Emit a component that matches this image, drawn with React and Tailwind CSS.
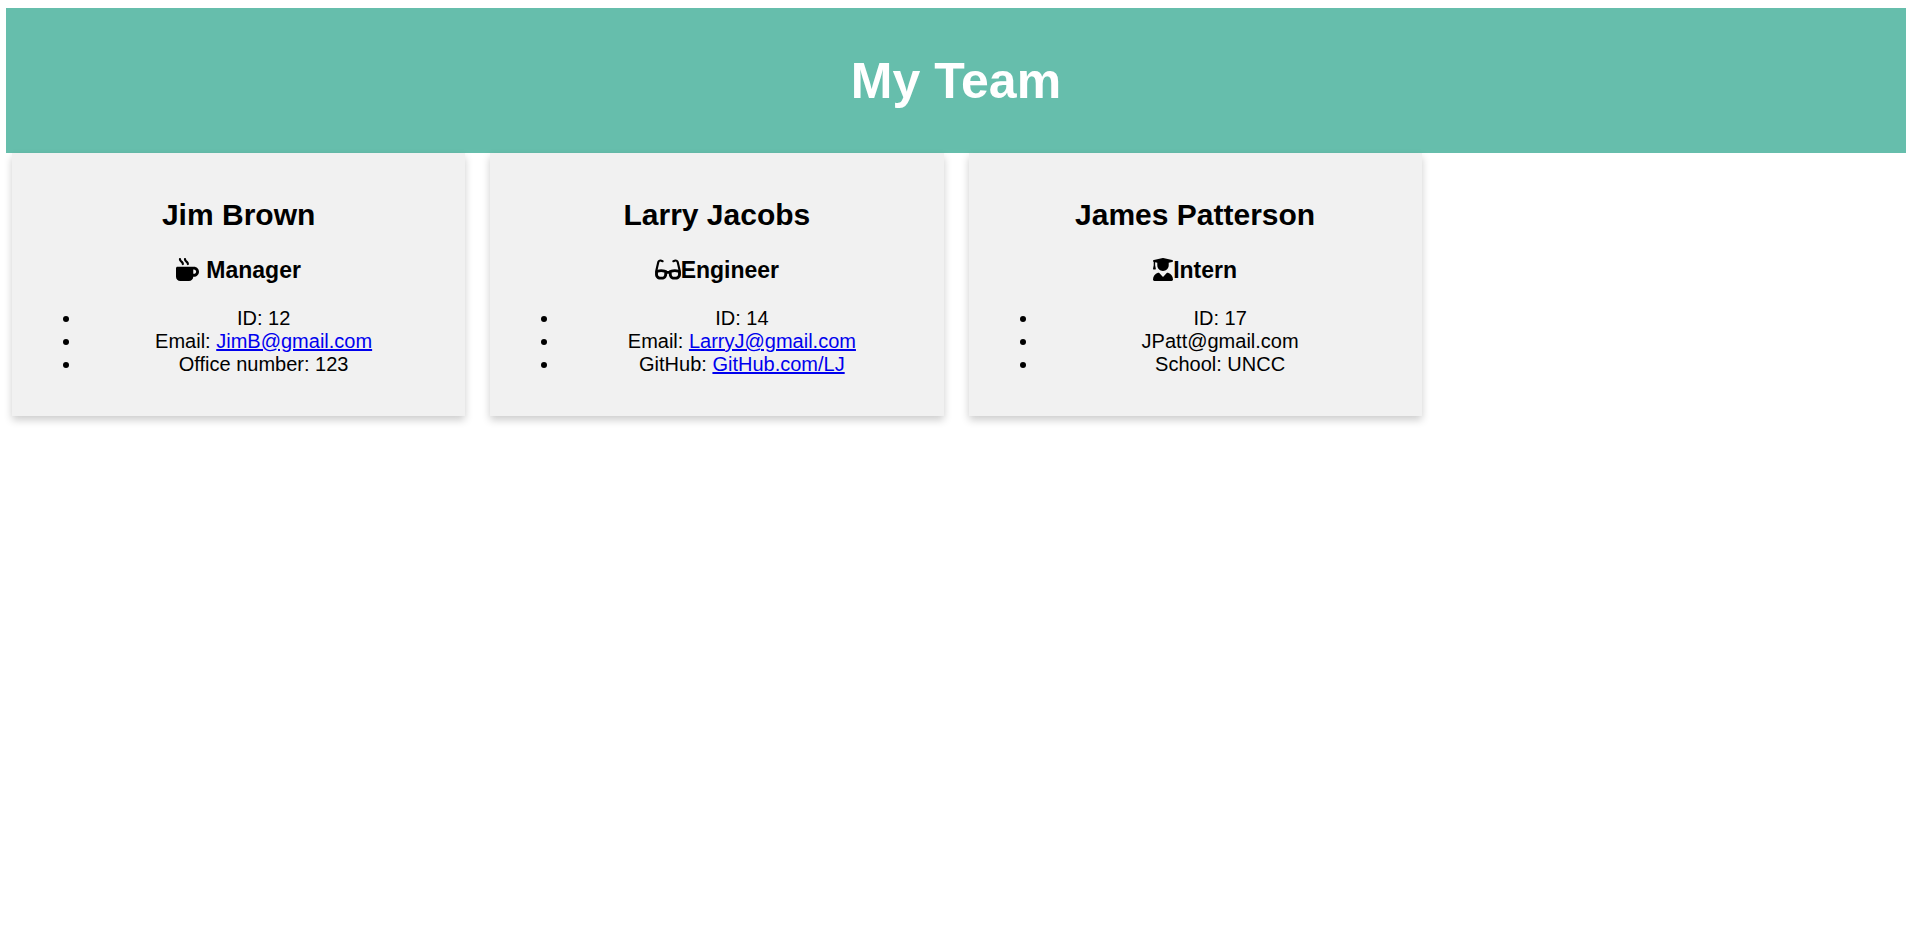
import { FaMugHot, FaGlasses, FaUserGraduate } from "react-icons/fa6";

const members = [
  {
    name: "Jim Brown",
    role: "Manager",
    icon: <FaMugHot className="mr-[7px] inline-block h-[23px] w-[23px] align-[-3px]" aria-hidden="true" />,
    details: [
      { text: "ID: 12" },
      { text: "Email: ", link: "JimB@gmail.com", href: "mailto:JimB@gmail.com" },
      { text: "Office number: 123" },
    ],
  },
  {
    name: "Larry Jacobs",
    role: "Engineer",
    icon: <FaGlasses className="inline-block h-[23px] w-[26px] align-[-3px]" aria-hidden="true" />,
    details: [
      { text: "ID: 14" },
      { text: "Email: ", link: "LarryJ@gmail.com", href: "mailto:LarryJ@gmail.com" },
      { text: "GitHub: ", link: "GitHub.com/LJ", href: "https://github.com/LJ" },
    ],
  },
  {
    name: "James Patterson",
    role: "Intern",
    icon: <FaUserGraduate className="inline-block h-[23px] w-[20px] align-[-3px]" aria-hidden="true" />,
    details: [{ text: "ID: 17" }, { text: "JPatt@gmail.com" }, { text: "School: UNCC" }],
  },
];

function MemberCard({ member }) {
  return (
    <article className="bg-[#f1f1f1] p-5 text-center shadow-[0_4px_8px_0_rgba(0,0,0,0.2)]">
      <h2 className="my-[25px] text-[30px] leading-[34px] font-bold">{member.name}</h2>
      <h3 className="mb-[23px] text-[23px] leading-[27px] font-bold">
        {member.icon}
        {member.role}
      </h3>
      <ul className="mb-5 list-disc pl-[50px] text-xl leading-[23px]">
        {member.details.map((item) => (
          <li key={item.text}>
            {item.text}
            {item.link && (
              <a href={item.href} className="text-[#0000ee] underline">
                {item.link}
              </a>
            )}
          </li>
        ))}
      </ul>
    </article>
  );
}

export default function App() {
  return (
    <div className="min-h-screen bg-white pt-2 font-['Liberation_Sans',Arial,sans-serif] text-black">
      <header className="mx-[6px] bg-[#66beac] pt-[45px] pb-[43px] text-center text-white">
        <h1 className="text-[50px] leading-[57px] font-bold">My Team</h1>
      </header>
      <main className="grid grid-cols-4 gap-[25px] px-3">
        {members.map((member) => (
          <MemberCard key={member.name} member={member} />
        ))}
      </main>
    </div>
  );
}
